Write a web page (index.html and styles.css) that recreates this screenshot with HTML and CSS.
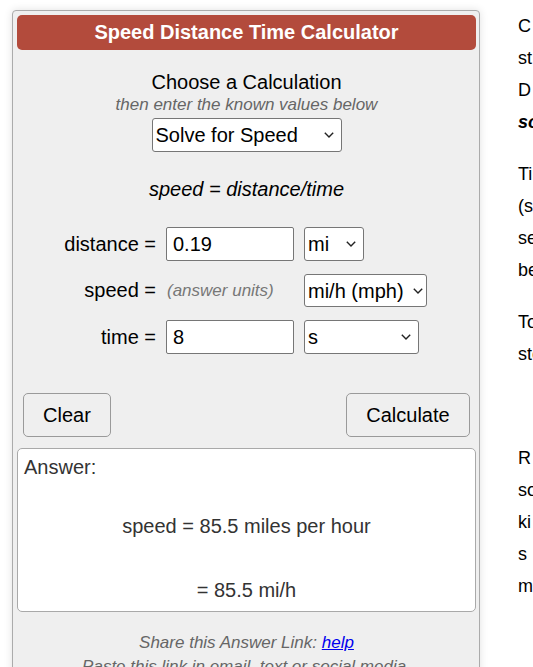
FILE: index.html
```html
<!DOCTYPE html>
<html lang="en">
<head>
<meta charset="utf-8">
<title>Speed Distance Time Calculator</title>
<link rel="stylesheet" href="styles.css">
</head>
<body>
<div class="page">
  <div class="calc">
    <div class="calc-head">Speed Distance Time Calculator</div>
    <div class="choose">Choose a Calculation</div>
    <div class="choose-sub">then enter the known values below</div>
    <div class="solve-wrap">
      <select class="solve">
        <option>Solve for Speed</option>
        <option>Solve for Distance</option>
        <option>Solve for Time</option>
      </select>
    </div>
    <div class="formula">speed = distance/time</div>
    <div class="rows">
      <label class="lbl">distance =</label>
      <input class="num" type="text" value="0.19">
      <select class="unit unit-mi"><option>mi</option><option>km</option></select>

      <label class="lbl">speed =</label>
      <span class="hint">(answer units)</span>
      <select class="unit unit-mph"><option>mi/h (mph)</option><option>km/h</option></select>

      <label class="lbl">time =</label>
      <input class="num" type="text" value="8">
      <select class="unit unit-s"><option>s</option><option>min</option></select>
    </div>
    <div class="buttons">
      <button class="btn btn-clear">Clear</button>
      <button class="btn btn-calc">Calculate</button>
    </div>
    <div class="answer">
      <div class="answer-label">Answer:</div>
      <div class="answer-line first">speed = 85.5 miles per hour</div>
      <div class="answer-line second">= 85.5 mi/h</div>
    </div>
    <div class="share">Share this Answer Link: <a href="#">help</a></div>
    <div class="share">Paste this link in email, text or social media.</div>
  </div>
  <div class="side">
    <p>C ompute the unknown variable in the equation<br>st ated for speed, where speed equals distance<br>D ivided by time. Enter two values and<br><b><i>solve for</i></b> speed, distance or time.</p>
    <p>Time is the duration of travel in units such as<br>(seconds, minutes, hours) and can be<br>selected separately from the speed units<br>before you calculate.</p>
    <p>To solve for speed enter distance and time<br>step by step, then choose answer units.</p>
    <p class="gap">R ate and speed are similar; both describe how<br>something moves over time, in miles or<br>ki nds of units per hour, or meters per<br>s &nbsp;&nbsp;&nbsp;for second, and<br>more.</p>
  </div>
</div>
</body>
</html>
```
FILE: styles.css
```css
html, body {
  margin: 0;
  padding: 0;
  background: #fff;
  overflow: hidden;
}
body {
  font-family: "Liberation Sans", Arial, sans-serif;
  color: #000;
}
.page {
  display: flex;
  align-items: flex-start;
  padding: 10px 0 0 12px;
  width: 1000px;
}
.calc {
  flex: 0 0 468px;
  box-sizing: border-box;
  width: 468px;
  height: 700px;
  border: 1px solid #ababab;
  border-radius: 4px;
  background: #efefef;
  padding: 4px 3px 0 4px;
  box-shadow: 0 0 8px rgba(0,0,0,0.12);
}
.calc-head {
  height: 35px;
  line-height: 35px;
  background: #b34b3c;
  border-radius: 5px;
  color: #fff;
  font-weight: bold;
  font-size: 20px;
  text-align: center;
}
.choose {
  margin-top: 20px;
  font-size: 20px;
  line-height: 24px;
  text-align: center;
}
.choose-sub {
  font-size: 17px;
  line-height: 22px;
  font-style: italic;
  color: #666;
  text-align: center;
}
.solve-wrap {
  display: flex;
  justify-content: center;
  margin-top: 2px;
}
select {
  -webkit-appearance: none;
  appearance: none;
  font-family: "Liberation Sans", Arial, sans-serif;
  font-size: 20px;
  color: #000;
  background-color: #fff;
  background-image: url("data:image/svg+xml;utf8,<svg xmlns='http://www.w3.org/2000/svg' width='10' height='6' viewBox='0 0 10 6'><path d='M0.8 0.8 L5 5 L9.2 0.8' fill='none' stroke='%23222' stroke-width='1.4'/></svg>");
  background-repeat: no-repeat;
  background-position: right 7px center;
  background-size: 10px 6px;
  border: 1px solid #767676;
  border-radius: 3px;
  box-sizing: border-box;
  height: 34px;
  padding: 0 20px 0 3px;
}
.solve {
  width: 190px;
}
.formula {
  margin-top: 26px;
  font-size: 20px;
  line-height: 22px;
  font-style: italic;
  text-align: center;
}
.rows {
  display: grid;
  grid-template-columns: 139px 128px auto;
  column-gap: 10px;
  row-gap: 13px;
  align-items: center;
  justify-items: start;
  margin-top: 27px;
}
.lbl {
  justify-self: end;
  font-size: 20px;
}
.num {
  box-sizing: border-box;
  width: 128px;
  height: 34px;
  font-family: "Liberation Sans", Arial, sans-serif;
  font-size: 20px;
  border: 1px solid #767676;
  border-radius: 2px;
  padding: 0 6px;
  background: #fff;
  margin: 0;
}
.hint {
  font-size: 17px;
  font-style: italic;
  color: #777;
  margin-left: 1px;
}
.unit-mi { width: 60px; }
.unit-mph { width: 123px; height: 33px; padding-right: 4px; background-position: right 3px center; }
.unit-s { width: 115px; }
.buttons {
  display: flex;
  justify-content: space-between;
  margin: 39px 6px 0 6px;
}
.btn {
  font-family: "Liberation Sans", Arial, sans-serif;
  font-size: 20px;
  height: 44px;
  background: #efefef;
  border: 1px solid #9a9a9a;
  border-radius: 5px;
  color: #000;
  padding: 0;
}
.btn-clear { width: 88px; }
.btn-calc { width: 124px; }
.answer {
  margin-top: 11px;
  box-sizing: border-box;
  height: 164px;
  background: #fff;
  border: 1px solid #a9a9a9;
  border-radius: 5px;
  padding: 7px 6px 0 6px;
  color: #333;
  font-size: 20px;
}
.answer-label {
  line-height: 22px;
}
.answer-line {
  text-align: center;
  line-height: 22px;
}
.answer-line.first { margin-top: 37px; }
.answer-line.second { margin-top: 42px; }
.share {
  font-size: 17px;
  font-style: italic;
  color: #666;
  text-align: center;
  line-height: 24px;
}
.answer + .share { margin-top: 19px; }
.share a { color: #0000ee; }
.side {
  margin-left: 38px;
  flex: 0 0 auto;
  white-space: nowrap;
  font-size: 18px;
  line-height: 32px;
  color: #000;
}
.side p {
  margin: 0 0 20px 0;
}
.side p.gap { margin-top: 72px; }
```
